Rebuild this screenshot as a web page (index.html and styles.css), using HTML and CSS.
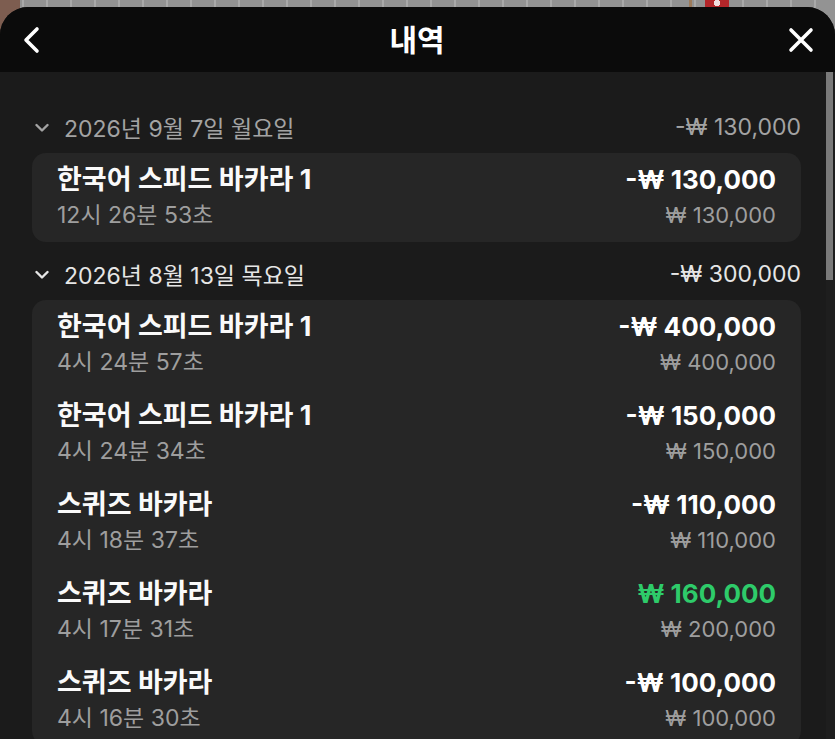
FILE: index.html
```html
<!DOCTYPE html>
<html lang="ko">
<head>
<meta charset="utf-8">
<title>내역</title>
<link rel="stylesheet" href="styles.css">
</head>
<body>
<div class="modal">
  <header class="modal-head">
    <button class="icon-btn" aria-label="뒤로">
      <svg width="20" height="28" viewBox="0 0 20 28"><polyline points="14,3 3,14 14,25" fill="none" stroke="#fff" stroke-width="3.6" stroke-linecap="round" stroke-linejoin="round"/></svg>
    </button>
    <h1 class="title">내역</h1>
    <button class="icon-btn" aria-label="닫기">
      <svg width="26" height="26" viewBox="0 0 26 26"><path d="M3 3 L23 23 M23 3 L3 23" fill="none" stroke="#fff" stroke-width="3.6" stroke-linecap="round"/></svg>
    </button>
  </header>
  <div class="modal-body">
    <div class="list">
      <section class="group">
        <div class="group-head muted">
          <span class="group-date">
            <svg class="chev" width="14" height="10" viewBox="0 0 14 10"><polyline points="1.5,2 7,7.5 12.5,2" fill="none" stroke="currentColor" stroke-width="2.4" stroke-linecap="round" stroke-linejoin="round"/></svg>
            2026년 9월 7일 월요일
          </span>
          <span class="group-total">-₩ 130,000</span>
        </div>
        <div class="card">
          <div class="row">
            <div class="row-left"><div class="name">한국어 스피드 바카라 1</div><div class="time">12시 26분 53초</div></div>
            <div class="row-right"><div class="amount">-₩ 130,000</div><div class="bet">₩ 130,000</div></div>
          </div>
        </div>
      </section>
      <section class="group">
        <div class="group-head">
          <span class="group-date">
            <svg class="chev" width="14" height="10" viewBox="0 0 14 10"><polyline points="1.5,2 7,7.5 12.5,2" fill="none" stroke="currentColor" stroke-width="2.4" stroke-linecap="round" stroke-linejoin="round"/></svg>
            2026년 8월 13일 목요일
          </span>
          <span class="group-total">-₩ 300,000</span>
        </div>
        <div class="card">
          <div class="row">
            <div class="row-left"><div class="name">한국어 스피드 바카라 1</div><div class="time">4시 24분 57초</div></div>
            <div class="row-right"><div class="amount">-₩ 400,000</div><div class="bet">₩ 400,000</div></div>
          </div>
          <div class="row">
            <div class="row-left"><div class="name">한국어 스피드 바카라 1</div><div class="time">4시 24분 34초</div></div>
            <div class="row-right"><div class="amount">-₩ 150,000</div><div class="bet">₩ 150,000</div></div>
          </div>
          <div class="row">
            <div class="row-left"><div class="name">스퀴즈 바카라</div><div class="time">4시 18분 37초</div></div>
            <div class="row-right"><div class="amount">-₩ 110,000</div><div class="bet">₩ 110,000</div></div>
          </div>
          <div class="row">
            <div class="row-left"><div class="name">스퀴즈 바카라</div><div class="time">4시 17분 31초</div></div>
            <div class="row-right"><div class="amount win">₩ 160,000</div><div class="bet">₩ 200,000</div></div>
          </div>
          <div class="row">
            <div class="row-left"><div class="name">스퀴즈 바카라</div><div class="time">4시 16분 30초</div></div>
            <div class="row-right"><div class="amount">-₩ 100,000</div><div class="bet">₩ 100,000</div></div>
          </div>
        </div>
      </section>
    </div>
    <div class="scrollbar"><div class="thumb"></div></div>
  </div>
</div>
</body>
</html>
```

FILE: styles.css
```css
* { box-sizing: border-box; }
html, body { height: 100%; }
body {
  margin: 0;
  overflow: hidden;
  font-family: "Inter", "Noto Sans CJK KR", sans-serif;
  background-color: #858585;
  background-image:
    radial-gradient(circle at 717px 3px, #f0dede 0 3px, #b3262a 3.5px 12px, transparent 12.5px),
    linear-gradient(90deg, transparent 689px, #9c7b5c 689px 692px, transparent 692px),
    linear-gradient(90deg, #7d5d50 0 20px, transparent 20px),
    repeating-linear-gradient(90deg, #939393 0 22px, #a9a9a9 22px 24px);
}
.modal {
  margin-top: 7px;
  height: 732px;
  background: #1b1b1b;
  border-radius: 28px 28px 0 0;
  overflow: hidden;
  display: flex;
  flex-direction: column;
}
.modal-head {
  height: 65px;
  flex: none;
  background: #0b0b0b;
  display: flex;
  align-items: center;
  justify-content: space-between;
  padding: 0 20px 0 19px;
}
.icon-btn {
  background: none;
  border: 0;
  padding: 0;
  width: 28px;
  height: 28px;
  display: flex;
  align-items: center;
  justify-content: center;
}
.title {
  margin: 0;
  color: #fff;
  font-size: 30px;
  font-weight: 700;
  line-height: 36px;
}
.modal-body {
  flex: 1;
  display: flex;
  min-height: 0;
}
.list {
  flex: 1;
  padding: 39px 25px 0 32px;
  overflow: hidden;
}
.scrollbar {
  width: 9px;
  flex: none;
  background: #1e1e1e;
}
.thumb {
  width: 7px;
  height: 208px;
  background: #7a7a7a;
}
.group + .group { margin-top: 16px; }
.group-head {
  height: 32px;
  margin-bottom: 10px;
  display: flex;
  align-items: center;
  justify-content: space-between;
  font-size: 23px;
  color: #e6e6e6;
}
.group-head.muted { color: #a3a3a3; }
.group-date {
  display: flex;
  align-items: center;
  gap: 15px;
  padding-left: 3px;
}
.chev { margin-top: 2px; }
.card {
  background: #262626;
  border-radius: 14px;
}
.row {
  display: flex;
  justify-content: space-between;
  padding: 10px 25px 11px;
}
.name {
  color: #fafafa;
  font-size: 27px;
  font-weight: 700;
  line-height: 34px;
}
.time {
  color: #9e9e9e;
  font-size: 23px;
  line-height: 32px;
  margin-top: 2px;
}
.bet {
  color: #9e9e9e;
  font-size: 22px;
  line-height: 32px;
  margin-top: 2px;
}
.row-right { text-align: right; }
.amount {
  color: #fff;
  font-size: 26px;
  font-weight: 700;
  line-height: 34px;
}
.amount.win { color: #2ecb6a; }
```
